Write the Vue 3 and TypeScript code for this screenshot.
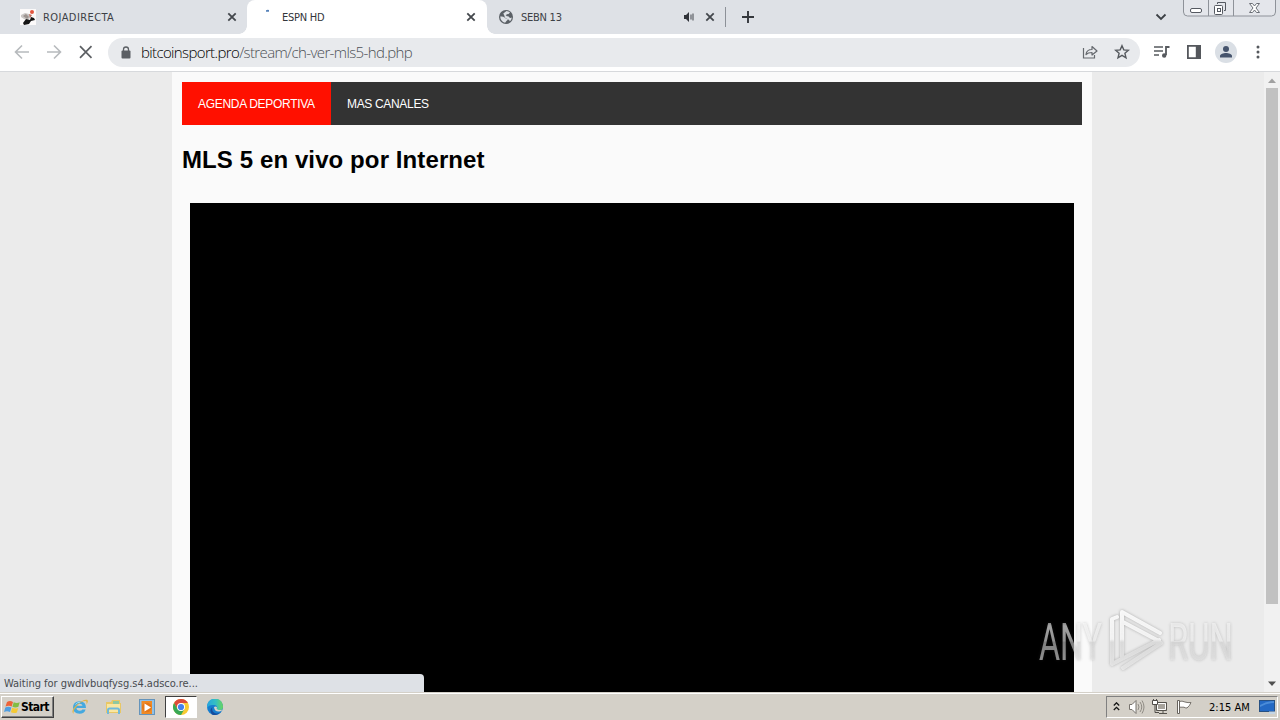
<script setup lang="ts">
interface Tab {
  title: string
  kind: 'photo' | 'loading' | 'globe'
  active: boolean
  audio: boolean
}

const tabs: Tab[] = [
  { title: 'ROJADIRECTA', kind: 'photo', active: false, audio: false },
  { title: 'ESPN HD', kind: 'loading', active: true, audio: false },
  { title: 'SEBN 13', kind: 'globe', active: false, audio: true },
]
</script>

<template>
  <div class="screen">
    <header class="tabstrip">
      <div v-for="tab in tabs" :key="tab.title" class="tab" :class="[tab.kind, { active: tab.active }]">
        <svg v-if="tab.kind === 'photo'" class="favicon" width="16" height="16" viewBox="0 0 16 16">
          <rect width="16" height="16" fill="#fcfafa" />
          <path d="M1 6l4-2 4 1 2 3-3 3-4-1-3-2z" fill="#c9c5c3" />
          <path d="M3 7l3-2 3 3-2 2z" fill="#9c938f" />
          <path d="M3 14l3-4 4 1 1-3 3 1 1 2-4 1-2 3-5 1z" fill="#151515" />
          <circle cx="12" cy="3" r="2" fill="#e2553f" />
          <path d="M9 5l3 1-2 3z" fill="#bd6b5d" />
        </svg>
        <svg v-else-if="tab.kind === 'loading'" class="favicon" width="16" height="16" viewBox="0 0 16 16">
          <path d="M6 1.200q1.500-.6 3-.2v1.800H6z" fill="#5380b9" />
        </svg>
        <svg v-else class="favicon" width="16" height="16" viewBox="0 0 16 16">
          <circle cx="8" cy="8" r="7" fill="#5b6066" />
          <path d="M2.200 7.500q3-.5 4.300 1 .8 1 2.200.9 1.600.3.800 1.600-.9.800-2.400 2.800Q2.500 12.500 2.200 7.500zM8.500 2q2 0 3.500 1.500L10.500 5l-2 .3q.2 1.400-1 1.400l1.700.6q1.500-.3 2.200 1.300 1 .7 2.500 0-.4 2.300-2 3.700-.7-1.600-2-2-1-1.300-2.400-1.200-1-.8-1-2.100Q6 6 5.300 4.600z" fill="#dee1e6" />
        </svg>
        <span class="title">{{ tab.title }}</span>
        <svg v-if="tab.audio" class="speaker" width="12" height="12" viewBox="0 0 12 12">
          <path d="M1 4h2l3-3v10L3 8H1z" fill="#303339" />
          <path d="M8 3.500v5M10 2.500v7" stroke="#50545a" stroke-width="1.100" />
        </svg>
        <svg class="close" width="10" height="10" viewBox="0 0 10 10">
          <path d="M1.300 1.300l7.400 7.400m0-7.400L1.300 8.700" stroke="#43474c" stroke-width="1.800" />
        </svg>
      </div>
      <i class="separator"></i>
      <svg class="plus" width="12" height="12" viewBox="0 0 12 12">
        <path d="M6 0v12M0 6h12" stroke="#34373c" stroke-width="1.900" />
      </svg>
      <svg class="chevron" width="12" height="8" viewBox="0 0 12 8">
        <path d="M1.500 1.500L6 6l4.500-4.500" fill="none" stroke="#3c4045" stroke-width="1.800" />
      </svg>
      <svg class="controls" width="93" height="17" viewBox="0 0 93 17">
        <path d="M.5 0v12q0 4 4 4h84q4 0 4-4V0M25.500 0v16M50.500 0v16" fill="#e4e6eb" stroke="#8e9299" />
        <rect x="7.500" y="8.500" width="11" height="4" rx="1.500" fill="#fff" stroke="#555961" />
        <path d="M34.500 4V2.500h8v8H41" fill="none" stroke="#555961" />
        <rect x="31.500" y="5.500" width="8" height="9" rx="1" fill="#fff" stroke="#555961" />
        <rect x="34.500" y="8.500" width="3" height="3" fill="none" stroke="#555961" />
        <path d="M66.500 3.500h3l2 2.500 2-2.500h3L73 8l3.500 4.500h-3l-2-2.500-2 2.500h-3L70 8z" fill="#fff" stroke="#6b6f76" />
      </svg>
    </header>

    <nav class="toolbar">
      <svg class="nav-icons" width="80" height="16" viewBox="0 0 80 16">
        <path d="M15 8H2M8 1.500L1.500 8 8 14.500M33 8h13M40 1.500L46.500 8 40 14.500" fill="none" stroke="#b7babd" stroke-width="1.600" />
        <path d="M66 2.200l11.500 11.600M77.500 2.200L66 13.800" stroke="#5c5f63" stroke-width="1.700" />
      </svg>
      <div class="address">
        <svg width="10" height="13" viewBox="0 0 10 13">
          <rect x=".5" y="4.500" width="9" height="8" rx="1" fill="#5b5f64" />
          <path d="M2.500 5V3.500a2.500 2.500 0 015 0V5" fill="none" stroke="#5b5f64" stroke-width="1.300" />
        </svg>
        <span class="url"><b>bitcoinsport.pro</b>/stream/ch-ver-mls5-hd.php</span>
        <svg class="share" width="16" height="16" viewBox="0 0 16 16">
          <path d="M1.500 4v10h11v-3" fill="none" stroke="#65696e" stroke-width="1.200" />
          <path d="M4 10.500c.4-3.600 2.500-5 6-5V2.500L15 7l-5 4V8.500c-2.500 0-4.500.4-6 2z" fill="none" stroke="#65696e" stroke-width="1.200" stroke-linejoin="round" />
        </svg>
        <svg class="star" width="16" height="16" viewBox="0 0 16 16">
          <path d="M8 1.700l1.800 4.200 4.600.4-3.500 3 1.100 4.500-4-2.400-4 2.400 1.100-4.500-3.500-3 4.600-.4z" fill="none" stroke="#55595e" stroke-width="1.400" />
        </svg>
      </div>
      <svg class="media" width="17" height="14" viewBox="0 0 17 14">
        <path d="M1 2h9M1 6h9M1 10h5" stroke="#56595e" stroke-width="1.700" />
        <path d="M16.500 2H13v8" fill="none" stroke="#56595e" stroke-width="1.800" />
        <circle cx="11.200" cy="10.500" r="2.200" fill="#56595e" />
      </svg>
      <svg class="panel" width="14" height="14" viewBox="0 0 14 14">
        <path fill-rule="evenodd" d="M0 0h14v14H0zM1.800 1.800v10.400h7V1.800z" fill="#54575c" />
      </svg>
      <svg class="avatar" width="22" height="22" viewBox="0 0 22 22">
        <circle cx="11" cy="11" r="11" fill="#dadfe5" />
        <circle cx="11" cy="8" r="3" fill="#46546d" />
        <path d="M5 16.500v-1.500c0-2 3.500-3 6-3s6 1 6 3v1.500z" fill="#46546d" />
      </svg>
      <svg class="dots" width="4" height="14" viewBox="0 0 4 14">
        <circle cx="2" cy="2" r="1.500" fill="#55585d" /><circle cx="2" cy="7" r="1.500" fill="#55585d" /><circle cx="2" cy="12" r="1.500" fill="#55585d" />
      </svg>
    </nav>

    <main class="viewport">
      <section class="page">
        <div class="menu">
          <a class="current"><span>AGENDA DEPORTIVA</span></a>
          <a><span>MAS CANALES</span></a>
        </div>
        <h1>MLS 5 en vivo por Internet</h1>
        <div class="player"></div>
      </section>
      <aside class="scrollbar">
        <svg width="16" height="16" viewBox="0 0 16 16"><path d="M4 11l4-4.500 4 4.500z" fill="#a1a1a1" /></svg>
        <i class="thumb"></i>
        <svg class="down" width="16" height="16" viewBox="0 0 16 16"><path d="M4 6.500h8L8 11z" fill="#505050" /></svg>
      </aside>
      <div class="status"><span>Waiting for gwdlvbuqfysg.s4.adsco.re...</span></div>
      <svg class="watermark" width="245" height="74" viewBox="0 0 245 74">
        <defs>
          <linearGradient id="glass" gradientUnits="userSpaceOnUse" x1="0" y1="18" x2="0" y2="56">
            <stop offset="0" stop-color="#fff" stop-opacity=".48" />
            <stop offset=".1" stop-color="#fff" stop-opacity=".62" />
            <stop offset=".5" stop-color="#fff" stop-opacity=".55" />
            <stop offset=".53" stop-color="#ddd" stop-opacity=".55" />
            <stop offset="1" stop-color="#e8e8e8" stop-opacity=".6" />
          </linearGradient>
          <linearGradient id="mark" gradientUnits="userSpaceOnUse" x1="0" y1="6" x2="0" y2="68">
            <stop offset="0" stop-color="#fff" stop-opacity=".9" />
            <stop offset=".47" stop-color="#fff" stop-opacity=".8" />
            <stop offset=".52" stop-color="#e2e2e2" stop-opacity=".8" />
            <stop offset="1" stop-color="#eee" stop-opacity=".8" />
          </linearGradient>
        </defs>
        <g class="letters">
          <text x="9" y="56" textLength="63" lengthAdjust="spacingAndGlyphs">ANY</text>
          <text x="138" y="56" textLength="65" lengthAdjust="spacingAndGlyphs">RUN</text>
        </g>
        <g class="mark">
          <path d="M87 13l-5 2v45l47-24M92 53V8l38 21M93 18l34 18M131 39L93 64" />
        </g>
      </svg>
    </main>

    <footer class="taskbar">
      <div class="start">
        <svg width="17" height="16" viewBox="0 0 17 16">
          <path d="M3 3q3-2 6 0L7.700 7.500Q5 6 1.500 7.500z" fill="#ed6338" />
          <path d="M9.700 3.200q3 1.600 6 .1l-1.300 4.500q-3 1.400-6-.1z" fill="#82bd43" />
          <path d="M1.300 8.500q3-1.500 6.100 0L6 13q-3-1.600-6 0z" fill="#4f9ee1" />
          <path d="M8.200 8.800q3 1.500 6 .1l-1.300 4.500q-3 1.400-6-.1z" fill="#f5ca35" />
        </svg>
        <span>Start</span>
      </div>
      <svg class="ie" width="18" height="18" viewBox="0 0 18 18">
        <path d="M15 10H5.500q.3 2.700 3.200 2.700 2 0 2.700-1.300h3.200q-1.300 4.400-6 4.400Q2 15.500 2 9.500T8.500 3.200Q15.200 3.500 15 10zM5.500 7.700h6Q11.200 5.700 8.500 5.700t-3 2z" fill="#45a9df" />
        <path d="M2.500 16q-3-3 2.500-8.500Q12 1 16 1.800q2 1-.6 5Q16 3 14.500 3 10 3 6 8q-4 4-3.500 8z" fill="#dfb449" />
        <path d="M4.500 6.500Q6 4.200 9 4.200" stroke="#9ddcf5" fill="none" />
      </svg>
      <svg class="folder" width="17" height="17" viewBox="0 0 17 17">
        <path d="M1 3h5l1-2h8v3h1v10H1z" fill="#e8c766" />
        <path d="M8 2h6v4H8z" fill="#8fc8a0" />
        <path d="M2 5h13v8H2z" fill="#f9e6a0" />
        <path d="M3 15v-4q0-1.500 1.500-1.500h8Q14 9.500 14 11v4" fill="none" stroke="#70b9dc" stroke-width="2" />
      </svg>
      <svg class="media-player" width="17" height="17" viewBox="0 0 17 17">
        <rect x=".5" y=".5" width="15" height="15" fill="#8fc1e8" stroke="#6594bb" />
        <rect x="2.500" y="2" width="10.500" height="13" fill="#f08a25" />
        <circle cx="7.800" cy="8.500" r="4.800" fill="#e57818" />
        <path d="M5.500 4.500L12 8.500l-6.500 4z" fill="#fff" />
      </svg>
      <div class="chrome">
        <svg width="16" height="16" viewBox="0 0 16 16">
          <circle cx="8" cy="8" r="8" fill="#f8ca32" />
          <path d="M8 4h6.930A8 8 0 001.070 4L4.500 10 8 8z" fill="#dc4b3b" />
          <path d="M1.070 4A8 8 0 008 16l3.500-6L8 8l-3.500 2z" fill="#38a855" />
          <circle cx="8" cy="8" r="4" fill="#fff" /><circle cx="8" cy="8" r="3.100" fill="#4481ed" />
        </svg>
      </div>
      <svg class="edge" width="16" height="16" viewBox="0 0 16 16">
        <defs><linearGradient id="edge-top"><stop stop-color="#26a6df" /><stop offset=".55" stop-color="#35bfc1" /><stop offset="1" stop-color="#6bd65b" /></linearGradient></defs>
        <circle cx="8" cy="8" r="8" fill="#167dcf" />
        <path d="M0 7.500A8 8 0 0116 7.500q0 4-4.500 4-3 0-1.500-2Q11 6.500 7 6 2 5.300 0 9z" fill="url(#edge-top)" />
        <path d="M5.500 8Q4 13 9 14.500q3 .5 5-2A8 8 0 015 15.400Q1.500 11 5.500 8z" fill="#164b9c" />
        <path d="M7 8q1.500-1 3 0-1 1.500.5 2.500 2 1 5 0-1 2-3 2Q7.500 13 7 8z" fill="#d6d2c8" />
      </svg>
      <div class="tray">
        <svg class="expand" width="7" height="10" viewBox="0 0 7 10"><path d="M.8 3.500l2.700-2.700 2.700 2.700M.8 8l2.700-2.700L6.200 8" fill="none" stroke="#151515" stroke-width="1.300" /></svg>
        <svg class="volume" width="17" height="16" viewBox="0 0 17 16">
          <path d="M1.500 5.500H4l4-4v13l-4-4H1.500z" fill="#fff" stroke="#77736d" />
          <path d="M10 5q2 3 0 6M12 3q3.500 5 0 10M14 1.500q4 6.500 0 13" fill="none" stroke="#8f8b84" />
        </svg>
        <svg class="network" width="16" height="16" viewBox="0 0 16 16">
          <path d="M4.500 3.500h10v8h-10z" fill="#a7a39c" stroke="#55524d" />
          <path d="M5.500 4.500h8v6h-8z" fill="none" stroke="#fff" />
          <path d="M7 14.500h8M11 12v2" fill="none" stroke="#55524d" />
          <path d="M.5 1.500h5v4h-5z" fill="#fff" stroke="#4f4c48" />
          <path d="M1.500 0v2m3-2v2M3 5.500v8h4" fill="none" stroke="#4f4c48" />
        </svg>
        <svg class="flag" width="17" height="16" viewBox="0 0 17 16">
          <path d="M2 2.500q3-1 6 .5 3 1 6 .5-1 3-4 5.500-2 0-3-.8H2z" fill="#fff" stroke="#77736d" />
          <path d="M.5 1.500h2v13h-2z" fill="#fff" stroke="#67635d" />
        </svg>
        <span>2:15 AM</span>
        <svg class="desktop" width="16" height="14" viewBox="0 0 16 14">
          <rect x=".5" y=".5" width="15" height="11" fill="#2469c4" stroke="#285183" />
          <path d="M1 5q7-4 14-4v2Q8 3 1 7z" fill="#4b8cd8" /><path d="M10 11.500h6V14h-6z" fill="#c4d5e5" />
        </svg>
      </div>
    </footer>
  </div>
</template>

<style>
body { overflow: hidden; }
</style>

<style scoped>
* { box-sizing: border-box; }
svg { flex: none; display: block; }
.screen { width: 1280px; height: 720px; display: flex; flex-direction: column; overflow: hidden; font: 11px "DejaVu Sans Condensed", "DejaVu Sans", sans-serif; }
.tabstrip { height: 34px; flex: none; display: flex; align-items: center; background: #dee1e6; color: #3c4045; }
.tab { width: 239px; height: 34px; display: flex; align-items: center; padding: 0 11px; flex: none; }
.tab.photo { width: 247px; padding: 0 10px 0 20px; }
.tab.active { width: 240px; background: #fff; border-radius: 8px 8px 0 0; color: #33363b; position: relative; }
.tab.active::before, .tab.active::after { content: ""; position: absolute; bottom: 0; width: 8px; height: 8px; }
.tab.active::before { left: -8px; background: radial-gradient(circle at 0 0, transparent 7.500px, #fff 8px); }
.tab.active::after { right: -8px; background: radial-gradient(circle at 100% 0, transparent 7.500px, #fff 8px); }
.tab.loading { padding-left: 13px; }
.loading .favicon { margin-right: 6px; }
.favicon { margin-right: 7px; }
.title { flex: 1; white-space: nowrap; line-height: 14px; padding-top: 1px; }
.photo .title { letter-spacing: .42px; }
.loading .title { letter-spacing: -.25px; }
.globe .title { letter-spacing: -.25px; }
.speaker { margin-right: 10px; }
.separator { width: 1px; height: 20px; margin-left: -1px; background: #8d9198; }
.plus { margin-left: 16px; }
.chevron { margin-left: auto; margin-right: 16px; }
.controls { align-self: flex-start; margin-right: 4px; }
.toolbar { height: 38px; flex: none; display: flex; align-items: center; background: #fff; border-bottom: 1px solid #d7d9dc; padding: 0 0 1px 14px; }
.nav-icons { margin-right: 14px; }
.address { width: 1032px; height: 29px; flex: none; border-radius: 15px; background: #e8eaed; display: flex; align-items: center; padding: 0 10px 0 13px; }
.url { flex: 1; margin-left: 10px; padding-bottom: 1px; font: 300 15px/20px "Open Sans", "Noto Sans", sans-serif; letter-spacing: -.63px; color: #4c5055; }
.url b { font-weight: 300; color: #000; }
.share { margin-right: 16px; }
.media { margin-left: 13px; }
.panel { margin-left: 17px; }
.avatar { margin-left: 14px; }
.dots { margin-left: 19px; }
.viewport { height: 620px; flex: none; display: flex; position: relative; background: #ebebeb; overflow: hidden; }
.page { width: 920px; flex: none; margin-left: 172px; padding: 10px 10px 0; background: #fafafa; font-family: "Liberation Sans", Arial, sans-serif; }
.menu { height: 43px; display: flex; background: #333; color: #fff; font-size: 12px; }
.menu a { display: flex; align-items: center; padding: 0 16px; white-space: nowrap; letter-spacing: -.33px; }
.menu .current { width: 149px; background: #ff1000; letter-spacing: -.3px; }
h1 { margin: 20px 0 28px; font-size: 24px; line-height: 30px; font-weight: 700; color: #000; letter-spacing: .1px; }
.player { margin: 0 8px; height: 500px; background: #000; }
.scrollbar { width: 16px; margin-left: auto; background: #f1f1f1; display: flex; flex-direction: column; align-items: center; }
.thumb { width: 12px; height: 516px; background: #c1c1c1; }
.down { margin-top: auto; margin-bottom: 1px; }
.status { position: absolute; left: 0; bottom: 0; width: 424px; height: 18px; display: flex; align-items: center; padding-left: 4px; background: #dee1e6; border-radius: 0 4px 0 0; color: #484b4f; letter-spacing: -.02px; white-space: nowrap; }
.watermark { position: absolute; left: 1030px; top: 532px; }
.letters { font: 400 52px Roboto, sans-serif; fill: url(#glass); filter: drop-shadow(0 0 1.500px rgba(70, 70, 70, .45)); }
.mark { fill: none; stroke: url(#mark); stroke-width: 4; stroke-linejoin: round; stroke-linecap: round; filter: drop-shadow(0 0 1.500px rgba(70, 70, 70, .45)); }
.taskbar { height: 28px; flex: none; display: flex; align-items: center; background: #d4d0c8; border-top: 1px solid #d4d0c8; box-shadow: inset 0 1px #fff; padding: 1px 2px 0 1px; color: #000; }
.start { width: 53px; height: 22px; border: 1px solid; border-color: #fff #404040 #404040 #fff; box-shadow: inset -1px -1px #808080; display: flex; align-items: center; padding-left: 2px; font-weight: 700; font-size: 12px; letter-spacing: -.55px; }
.ie { margin-left: 17px; }
.folder { margin-left: 16px; }
.media-player { margin-left: 17px; }
.chrome { width: 32px; height: 22px; margin-left: 9px; display: flex; align-items: center; justify-content: center; background: #fff; border: 1px solid; border-color: #404040 #fff #fff #404040; }
.edge { margin-left: 10px; }
.tray { width: 172px; height: 22px; margin-left: auto; border: 1px solid; border-color: #808080 #fff #fff #808080; display: flex; align-items: center; padding-left: 6px; }
.volume { margin-left: 8px; }
.network { margin-left: 7px; }
.flag { margin-left: 9px; }
.tray span { width: 43px; margin-left: 15px; white-space: nowrap; letter-spacing: .02px; }
.desktop { margin-left: 7px; }
</style>
